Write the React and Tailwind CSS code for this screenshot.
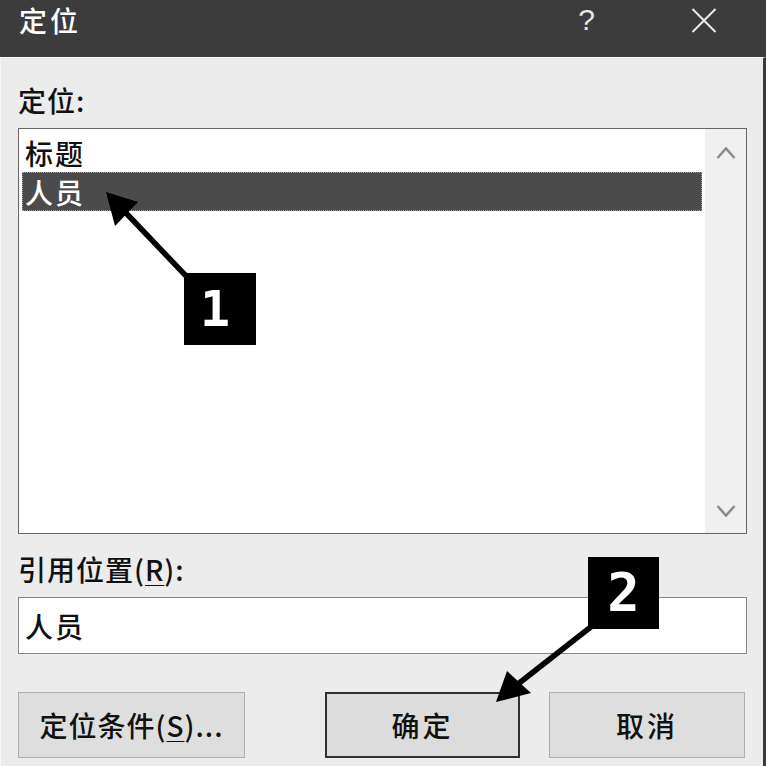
import React from "react";

const font = { fontFamily: '"Noto Sans CJK SC", "Noto Sans", sans-serif' };

function Chevron({ up }) {
  return (
    <svg width="20" height="12" viewBox="0 0 20 12">
      <polyline
        points={up ? "1.5,11 10,1.5 18.5,11" : "1.5,1 10,10.5 18.5,1"}
        fill="none"
        stroke="#8c8c8c"
        strokeWidth="2.6"
      />
    </svg>
  );
}

export default function App() {
  return (
    <div
      className="relative w-[766px] h-[766px] overflow-hidden bg-[#ececec] font-medium text-[#111]"
      style={font}
    >
      {/* Title bar */}
      <div className="flex h-[57px] items-start bg-[#3c3c3c] text-white">
        <div className="pl-[19px] pt-[4px] text-[28px] leading-[32px] tracking-[3px]">定位</div>
        <div className="flex-1" />
        <div
          className="mt-[3px] text-[30px] font-normal leading-[34px] text-[#e6e6e6]"
          style={{ fontFamily: '"Liberation Sans", sans-serif' }}
        >
          ?
        </div>
        <div className="ml-[96px] mr-[49px] mt-[8px]">
          <svg width="26" height="25" viewBox="0 0 26 25">
            <path d="M1.5 1 L24.5 24 M24.5 1 L1.5 24" stroke="#ececec" strokeWidth="2" fill="none" />
          </svg>
        </div>
      </div>

      {/* Body */}
      <div className="flex h-[709px] flex-col border-l border-t border-l-[#f7f7f7] border-t-[#f7f7f7] border-r-[3px] border-r-[#3a3a3a] pl-[17px] pr-[16px]">
        <div className="mt-[28px] h-[28px] text-[28px] leading-[28px] tracking-[1px]">定位:</div>

        {/* List box */}
        <div className="mt-[14px] flex h-[406px] border border-[#666666] bg-white">
          <div className="flex-1 px-[3px] pt-[4px]">
            <div className="flex h-[39px] items-center pl-[3px] text-[28px] tracking-[2px]">标题</div>
            <div className="flex h-[39px] items-center border border-dotted border-[#a0a0a0] bg-[#4b4b4b] pl-[2px] text-[28px] tracking-[2px] text-white">
              人员
            </div>
          </div>
          <div className="flex w-[41px] flex-col items-center justify-between bg-[#f0f0f0] pb-[16px] pt-[18px]">
            <Chevron up />
            <Chevron />
          </div>
        </div>

        <div className="mt-[21px] h-[28px] text-[28px] leading-[28px] tracking-[1px]">
          引用位置(<span className="underline underline-offset-4 decoration-1">R</span>):
        </div>

        <div className="mt-[14px] flex h-[57px] items-center border border-[#858585] bg-white pl-[6px] text-[28px] tracking-[2px]">
          人员
        </div>

        {/* Buttons */}
        <div className="mt-[38px] flex h-[66px]">
          <div className="flex w-[227px] items-center justify-center border border-[#adadad] bg-[#dedede] text-[28px] tracking-[1px]">
            定位条件(<span className="underline underline-offset-4 decoration-1">S</span>)...
          </div>
          <div className="ml-[80px] flex w-[195px] items-center justify-center border-2 border-[#303030] bg-[#dcdcdc] text-[28px] tracking-[3px]">
            确定
          </div>
          <div className="ml-[29px] flex w-[196px] items-center justify-center border border-[#adadad] bg-[#dedede] text-[28px] tracking-[3px]">
            取消
          </div>
        </div>
      </div>

      {/* Annotation arrows */}
      <svg className="pointer-events-none absolute left-0 top-0" width="766" height="766" viewBox="0 0 766 766">
        <line x1="126" y1="213" x2="188" y2="278" stroke="#000" strokeWidth="5.5" />
        <polygon points="106,192 115,226 138,202" fill="#000" />
        <line x1="592" y1="626" x2="518" y2="684" stroke="#000" strokeWidth="5.5" />
        <polygon points="496,702 507,671 531,693" fill="#000" />
      </svg>

      {/* Badges */}
      <div
        className="absolute left-[184px] top-[273px] flex h-[72px] w-[72px] items-center justify-center bg-black pr-[10px] text-[50px] font-bold leading-none text-white"
        style={{ fontFamily: '"DejaVu Sans Mono", monospace' }}
      >
        1
      </div>
      <div
        className="absolute left-[588px] top-[557px] flex h-[72px] w-[71px] items-center justify-center bg-black text-[54px] font-bold leading-none text-white"
        style={{ fontFamily: '"DejaVu Sans Mono", monospace' }}
      >
        2
      </div>
    </div>
  );
}
